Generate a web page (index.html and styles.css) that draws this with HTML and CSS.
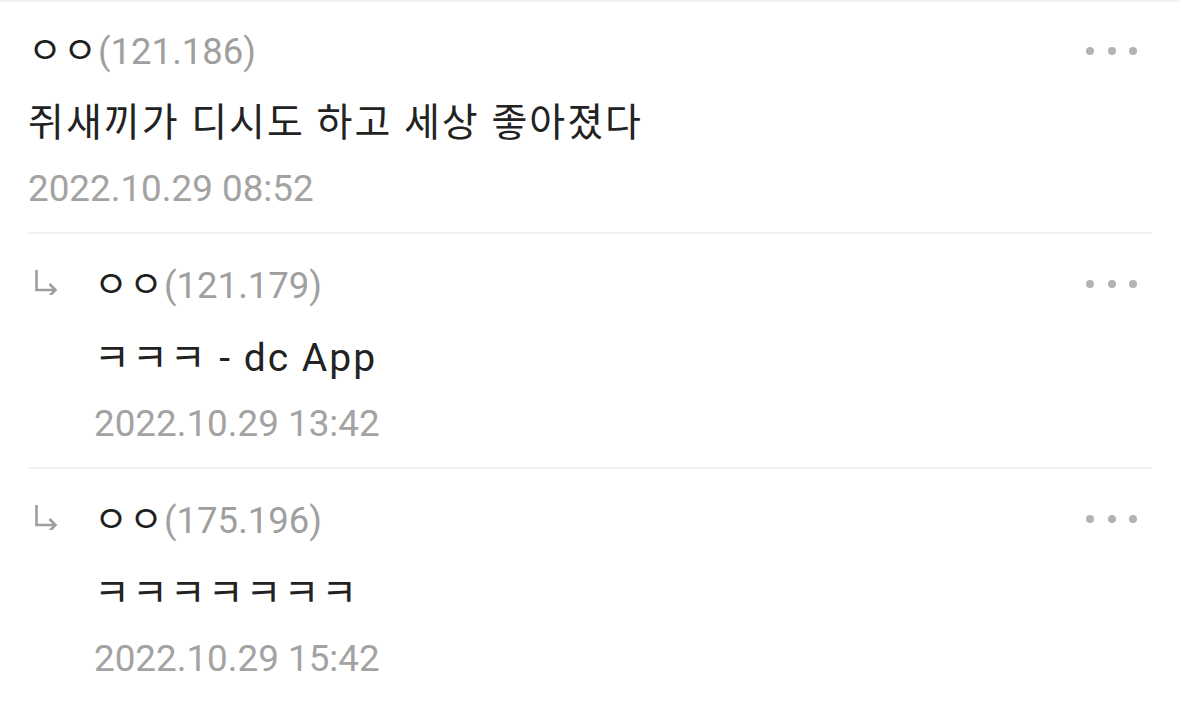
FILE: index.html
```html
<!DOCTYPE html>
<html lang="ko">
<head>
<meta charset="utf-8">
<link rel="stylesheet" href="styles.css">
</head>
<body>
<div class="topline"></div>
<ul class="comments">
  <li class="comment">
    <div class="body">
      <div class="head">
        <span class="nick">ㅇㅇ</span><span class="ip">(121.186)</span>
      </div>
      <p class="text">쥐새끼가 디시도 하고 세상 좋아졌다</p>
      <div class="date">2022.10.29 08:52</div>
    </div>
    <div class="more"><i></i><i></i><i></i></div>
  </li>
  <li class="comment reply">
    <svg class="arrow" width="26" height="26" viewBox="0 0 26 26"><path d="M3.5 1 V21 H22.5 M16.5 15 L22.5 21 L16.5 27" fill="none" stroke="#9e9e9e" stroke-width="2.6" stroke-linejoin="miter"/></svg>
    <div class="body">
      <div class="head">
        <span class="nick">ㅇㅇ</span><span class="ip">(121.179)</span>
      </div>
      <p class="text">ㅋㅋㅋ - dc App</p>
      <div class="date">2022.10.29 13:42</div>
    </div>
    <div class="more"><i></i><i></i><i></i></div>
  </li>
  <li class="comment reply">
    <svg class="arrow" width="26" height="26" viewBox="0 0 26 26"><path d="M3.5 1 V21 H22.5 M16.5 15 L22.5 21 L16.5 27" fill="none" stroke="#9e9e9e" stroke-width="2.6" stroke-linejoin="miter"/></svg>
    <div class="body">
      <div class="head">
        <span class="nick">ㅇㅇ</span><span class="ip">(175.196)</span>
      </div>
      <p class="text">ㅋㅋㅋㅋㅋㅋㅋ</p>
      <div class="date">2022.10.29 15:42</div>
    </div>
    <div class="more"><i></i><i></i><i></i></div>
  </li>
</ul>
</body>
</html>
```
FILE: styles.css
```css
html, body {
  margin: 0;
  padding: 0;
  background: #ffffff;
}
body {
  width: 1179px;
  height: 718px;
  overflow: hidden;
  font-family: Roboto, "Noto Sans CJK KR", sans-serif;
  font-size: 36px;
  color: #222222;
}
.topline {
  height: 2px;
  background: #f3f3f3;
}
.comments {
  list-style: none;
  margin: 0 27px 0 28px;
  padding: 0;
}
.comment {
  display: flex;
  align-items: flex-start;
  padding: 24px 0 21px;
  border-bottom: 2px solid #f0f0f0;
}
.comment:last-child {
  border-bottom: none;
}
.comment.reply {
  padding-top: 26px;
}
.arrow {
  flex: none;
  width: 26px;
  height: 26px;
  margin: 9px 35px 0 5px;
}
.body {
  flex: 1;
  display: flex;
  flex-direction: column;
}
.head {
  height: 44px;
  line-height: 44px;
  white-space: nowrap;
}
.nick {
  font-family: "Noto Sans CJK KR", sans-serif;
  font-size: 37px;
  color: #1e1e1e;
  letter-spacing: 1px;
}
.ip {
  font-size: 36.5px;
  color: #9f9f9f;
}
.text {
  margin: 31px 0 0;
  height: 44px;
  line-height: 44px;
  font-size: 39px;
  letter-spacing: 2px;
  color: #222222;
  white-space: nowrap;
}
.reply .text {
  margin-top: 32px;
}
.date {
  margin-top: 22px;
  height: 44px;
  line-height: 44px;
  font-size: 36.8px;
  color: #a3a3a3;
  white-space: nowrap;
}
.more {
  flex: none;
  display: flex;
  gap: 13.5px;
  margin: 21px 15px 0 0;
}
.reply .more {
  margin-top: 20px;
}
.more i {
  display: block;
  width: 8px;
  height: 8px;
  border-radius: 50%;
  background: #b3b3b3;
}
```
